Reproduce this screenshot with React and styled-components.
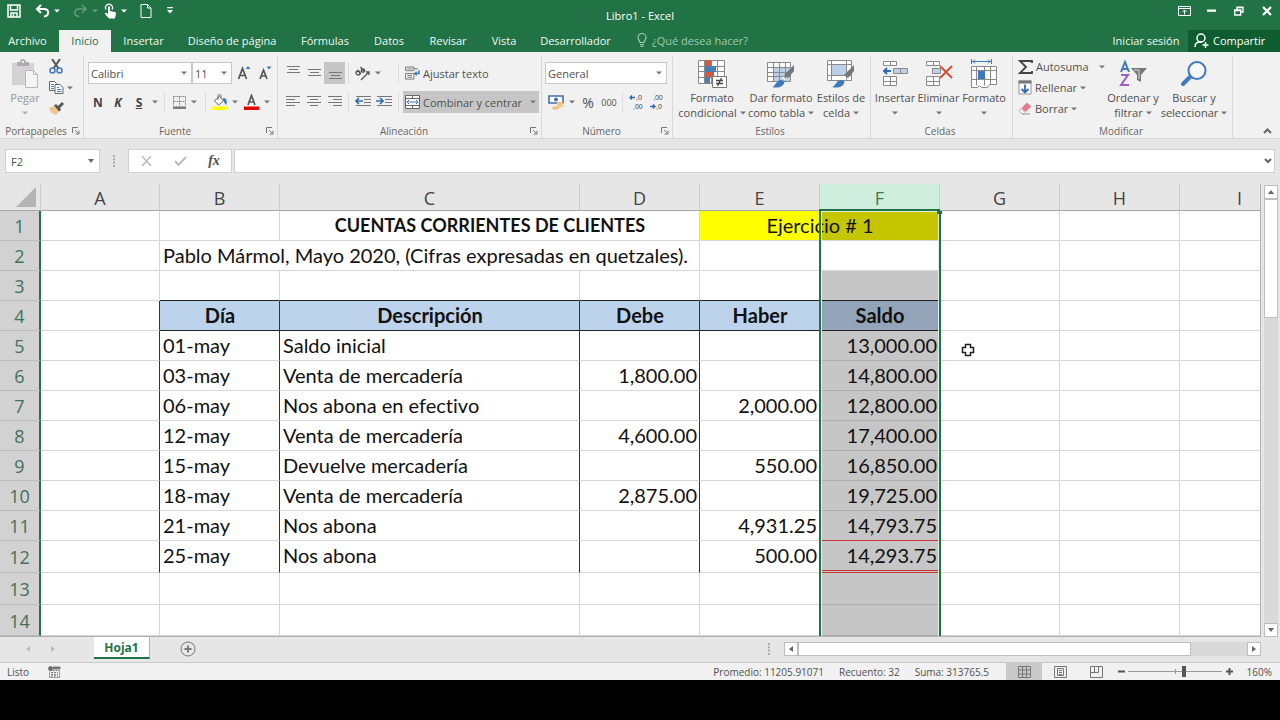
import React, { useState } from "react";
import styled, { createGlobalStyle, css } from "styled-components";

const GlobalStyle = createGlobalStyle`
    * {
        box-sizing: border-box;
    }
    body {
        margin: 0;
        background-color: #000;
        font-family: "Open Sans", "Noto Sans", sans-serif;
        font-size: 11px;
        color: #505050;
    }
    button, input, select {
        font: inherit;
        color: inherit;
    }
    button {
        border: none;
        padding: 0;
        background: none;
    }
`;

const Page = styled.div`
    display: flex;
    flex-direction: column;
    height: 100vh;
    padding-bottom: 40px;
    overflow: hidden;
    background-color: #000;
`;
const TitleBar = styled.header`
    display: grid;
    grid-template-columns: 1fr auto 1fr;
    height: 30px;
    flex: none;
    background-color: #217346;
    color: white;
`;
const QuickAccess = styled.div`
    display: flex;
    align-items: center;
    height: 21px;
    padding-left: 3px;
`;
const WindowTitle = styled.h1`
    margin: 0;
    font-size: 11px;
    font-weight: 400;
    line-height: 31px;
`;
const WindowButtons = styled.div`
    display: flex;
    align-items: center;
    justify-content: flex-end;
    height: 21px;
`;
const BarButton = styled.button`
    display: flex;
    align-items: center;
    justify-content: center;
    gap: 4px;
    width: ${(props) => props.$w}px;
    height: 21px;
    opacity: ${(props) => (props.$dim ? 0.3 : 1)};
`;

const TabRow = styled.nav`
    display: flex;
    height: 22px;
    flex: none;
    background-color: #217346;
    color: white;
`;
const Tab = styled.button`
    width: ${(props) => props.$w}px;
    height: 22px;
    padding-bottom: 2px;
    white-space: nowrap;
    background-color: ${(props) => (props.$active ? "#f1f1f1" : "transparent")};
    color: ${(props) => (props.$active ? "#217346" : "#f0f7f3")};

    &:first-child {
        margin-right: 4px;
    }
`;
const TellMe = styled.button`
    display: flex;
    align-items: center;
    gap: 5px;
    margin-left: 14px;
    padding-bottom: 2px;
    color: #9ccbb0;
`;
const SignIn = styled(Tab)`
    margin-left: auto;
`;
const Share = styled.button`
    display: flex;
    align-items: center;
    gap: 4px;
    width: 92px;
    padding: 0 0 2px 6px;
    background-color: #0e5c2f;
    color: white;
`;

const Ribbon = styled.div`
    display: flex;
    height: 87px;
    flex: none;
    padding-top: 4px;
    background-color: #f1f1f1;
    border-bottom: 1px solid #d5d5d5;
`;
const GroupBox = styled.section`
    display: flex;
    flex-direction: column;
    justify-content: space-between;
    width: ${(props) => props.$w}px;
    flex: none;
    border-right: 1px solid #d8d8d8;
`;
const GroupBody = styled.div`
    display: flex;
    height: 66px;
    padding-left: ${(props) => props.$pad}px;
`;
const GroupFooter = styled.div`
    display: flex;
    align-items: center;
    height: 14px;
    padding-right: 3px;
    font-size: 10px;
    color: #666;
`;
const GroupName = styled.span`
    flex: 1;
    text-align: center;
    white-space: nowrap;
`;
const Rows = styled.div`
    display: flex;
    flex-direction: column;
    gap: 7px;
    padding-top: 6px;
`;
const Row = styled.div`
    display: flex;
    align-items: center;
    height: 22px;
`;
const Tool = styled.button`
    display: flex;
    align-items: center;
    justify-content: center;
    width: ${(props) => props.$w || 21}px;
    height: 22px;
    font-size: ${(props) => props.$size || 11}px;
    background-color: ${(props) => (props.$on ? "#c6c6c6" : "transparent")};
`;
const CaretBox = styled.button`
    display: flex;
    align-items: center;
    width: ${(props) => props.$w}px;
    height: 22px;
    padding-left: 2px;
`;
const Sep = styled.span`
    width: 1px;
    height: 20px;
    margin: 0 ${(props) => props.$gap || 4}px;
    background-color: #dcdcdc;
`;
const Letter = styled.span`
    font-size: 12px;
    font-weight: 700;
    font-style: ${(props) => (props.$italic ? "italic" : "normal")};
    text-decoration: ${(props) => (props.$under ? "underline" : "none")};
    color: #444;
`;
const Combo = styled.span`
    display: flex;
    align-items: center;
    width: ${(props) => props.$w}px;
    height: 22px;
    padding-right: 4px;
    border: 1px solid #c8c8c8;
    background-color: white;
`;
const ComboSelect = styled.select`
    appearance: none;
    flex: 1;
    min-width: 0;
    border: none;
    padding: 0 0 0 2px;
    background: none;
    outline: none;
`;
const WideTool = styled.button`
    display: flex;
    align-items: center;
    gap: 3px;
    height: 22px;
    padding: 0 3px 0 2px;
    white-space: nowrap;
    background-color: ${(props) => (props.$on ? "#c6c6c6" : "transparent")};

    svg:last-child:not(:first-child) {
        margin-left: 5px;
    }
`;
const SmallTools = styled.div`
    display: flex;
    flex-direction: column;
    width: ${(props) => props.$w}px;
`;
const SmallTool = styled.button`
    display: flex;
    align-items: center;
    gap: 3px;
    height: 21px;
    padding-left: 1px;
    white-space: nowrap;
`;
const ToolName = styled.span`
    flex: ${(props) => (props.$grow ? 1 : "none")};
    text-align: left;
`;
const BigTool = styled.button`
    display: flex;
    flex-direction: column;
    align-items: center;
    width: ${(props) => props.$w}px;
    padding-top: 2px;
    line-height: 15px;
    white-space: nowrap;
    opacity: ${(props) => (props.$dim ? 0.55 : 1)};
`;
const BigIcon = styled.span`
    display: flex;
    align-items: center;
    justify-content: center;
    height: 32px;
`;
const BigLine = styled.span`
    display: flex;
    align-items: center;
    gap: 3px;
    height: 15px;
`;
const Collapse = styled.button`
    display: flex;
    align-items: flex-end;
    margin: 0 8px 4px auto;
`;

const FormulaBar = styled.div`
    display: flex;
    align-items: center;
    height: 45px;
    flex: none;
    padding: 0 5px 1px;
    background-color: #e6e6e6;
`;
const NameBox = styled.div`
    display: flex;
    align-items: center;
    width: 95px;
    height: 24px;
    padding-right: 5px;
    border: 1px solid #d0d0d0;
    background-color: white;
`;
const BareInput = styled.input`
    flex: 1;
    min-width: 0;
    border: none;
    padding: 0 5px;
    background: none;
    outline: none;
`;
const DotsBox = styled.span`
    display: flex;
    justify-content: center;
    width: 28px;
`;
const EditButtons = styled.div`
    display: flex;
    width: 104px;
    height: 24px;
    border: 1px solid #d0d0d0;
    background-color: white;
`;
const EditButton = styled.button`
    display: flex;
    align-items: center;
    justify-content: center;
    flex: 1;
`;
const FormulaField = styled(NameBox)`
    flex: 1;
    margin-left: 2px;
    padding-right: 2px;
`;

const SheetArea = styled.main`
    display: flex;
    flex: 1;
    min-height: 0;
    background-color: #e6e6e6;
`;
const GridView = styled.div`
    flex: 1;
    min-width: 0;
    overflow: hidden;
    background-color: white;
    border-right: 1px solid #b0b0b0;
    border-bottom: 1px solid #b0b0b0;
`;
const Grid = styled.table`
    width: 1300px;
    table-layout: fixed;
    border-collapse: separate;
    border-spacing: 0;
    font-family: Lato, "Open Sans", sans-serif;
    font-size: 20px;
    font-variant-ligatures: none;
    color: #111;
`;
const ColHead = styled.th`
    position: relative;
    height: 27px;
    padding: 2px 0 0;
    font-family: "Open Sans", sans-serif;
    font-size: 18px;
    font-weight: 400;
    line-height: 24px;
    background-color: ${(props) => (props.$selected ? "#cfeedd" : "#e6e6e6")};
    color: ${(props) => (props.$selected ? "#3c7a5a" : "#444")};
    border-right: 1px solid #cdcdcd;
    border-bottom: 1px solid #a8a8a8;
`;
const SelectionFrame = styled.span`
    position: absolute;
    top: calc(100% - 1px);
    left: -1px;
    right: -2px;
    height: 100vh;
    border: 2px solid #217346;
    box-shadow: inset 0 0 0 1px #e4efe8;
    pointer-events: none;

    &::after {
        content: "";
        position: absolute;
        top: -2px;
        right: -3px;
        width: 5px;
        height: 5px;
        background-color: #217346;
    }
`;
const Corner = styled.th`
    height: 27px;
    padding: 0 4px 3px 0;
    vertical-align: bottom;
    background-color: #e6e6e6;
    border-right: 1px solid #cdcdcd;
    border-bottom: 1px solid #a8a8a8;

    svg {
        display: block;
        margin-left: auto;
    }
`;
const RowHead = styled.th`
    height: ${(props) => props.$h}px;
    padding: 1px 0 0;
    font-family: "Open Sans", sans-serif;
    font-size: 18px;
    font-weight: 400;
    line-height: 26px;
    background-color: #d2d2d2;
    color: #44705a;
    border-right: 2px solid #217346;
    border-bottom: 1px solid #bcbcbc;
`;
const Cell = styled.td`
    padding: 0 2px 0 3px;
    vertical-align: top;
    font-size: ${(props) => (props.$heading ? 18 : 20)}px;
    line-height: 28px;
    white-space: nowrap;
    text-align: ${(props) => props.$align || "left"};
    font-weight: ${(props) => (props.$bold || props.$heading ? 700 : 400)};
    background: ${(props) => props.$bg || "white"};
    border-right: 1px solid ${(props) => (props.$lineRight ? "#333" : "#d6d6d6")};
    border-bottom: 1px solid ${(props) => (props.$lineBottom ? "#222" : "#d6d6d6")};

    ${(props) => props.$tone === "selected" && css`
        border-bottom-color: #adadad;
    `}
    ${(props) => props.$red && css`
        border-bottom: ${props.$red === "double" ? "3px double" : "1px solid"} #c93434;
    `}
`;

const ScrollColumn = styled.div`
    display: flex;
    flex-direction: column;
    width: 14px;
    margin: 1px 2px 0 3px;
    background-color: #d9d9d9;
`;
const ScrollButton = styled.button`
    display: flex;
    align-items: center;
    justify-content: center;
    width: 14px;
    height: 14px;
    flex: none;
    border: 1px solid #bdbdbd;
    background-color: white;
`;
const ThumbV = styled.div`
    height: 119px;
    border: 1px solid #bdbdbd;
    background-color: white;
`;
const Spring = styled.span`
    flex: 1;
`;

const SheetBar = styled.div`
    display: flex;
    height: 25px;
    flex: none;
    padding: 0 19px 2px 0;
    background-color: #e6e6e6;
`;
const SheetNav = styled.div`
    display: flex;
    align-items: center;
    justify-content: space-between;
    width: 94px;
    padding: 0 38px 0 25px;
`;
const SheetTab = styled.button`
    width: 56px;
    height: 22px;
    font-size: 12px;
    font-weight: 700;
    background-color: white;
    border-bottom: 2px solid #217346;
    border-right: 1px solid #b5b5b5;
    color: #217346;
`;
const AddSheet = styled.button`
    display: flex;
    align-items: center;
    margin-left: 30px;
`;
const ScrollRow = styled.div`
    display: flex;
    align-self: center;
    width: 477px;
    height: 14px;
    background-color: #d9d9d9;
`;
const ThumbH = styled.div`
    width: 393px;
    border: 1px solid #bdbdbd;
    background-color: white;
`;
const BarDots = styled(DotsBox)`
    align-items: center;
    width: 31px;
    margin-left: auto;
`;

const StatusBar = styled.footer`
    display: flex;
    align-items: center;
    height: 18px;
    flex: none;
    padding: 0 8px 0 7px;
    border-top: 1px solid #c9c9c9;
    background-color: #f1f1f1;
    font-size: 10px;
`;
const Stats = styled.div`
    display: flex;
    gap: 15px;
    margin: 0 17px 0 auto;
    white-space: nowrap;
`;
const MacroButton = styled.button`
    display: flex;
    margin-left: 19px;
`;
const ViewButton = styled.button`
    display: flex;
    align-items: center;
    justify-content: center;
    width: 36px;
    height: 17px;
    background-color: ${(props) => (props.$on ? "#c9c9c9" : "transparent")};
`;
const ZoomButton = styled.button`
    display: flex;
    align-items: center;
    justify-content: center;
    width: 14px;
    height: 17px;
`;
const ZoomSlider = styled.input`
    appearance: none;
    width: 94px;
    height: 12px;
    margin: 0;
    background: linear-gradient(#9a9a9a, #9a9a9a) center / 100% 1px no-repeat,
        linear-gradient(#9a9a9a, #9a9a9a) center / 1px 5px no-repeat;

    &::-webkit-slider-thumb {
        appearance: none;
        width: 4px;
        height: 11px;
        background-color: #555;
    }
`;
const ZoomLevel = styled.span`
    width: 36px;
    text-align: right;
`;
const Pointer = styled.svg`
    position: absolute;
    top: 343px;
    left: 961px;
    pointer-events: none;
`;

const Caret = ({ color = "#777" }) => (
    <svg width="6" height="4" viewBox="0 0 6 4"><path d="M0 .5h6L3 3.5z" fill={color} /></svg>
);
const Triangle = ({ dir, color = "#666" }) => {
    const shapes = { up: "M0 5h6L3 1z", down: "M0 1h6L3 5z", left: "M5 0v6L1 3z", right: "M1 0v6l4-3z" };
    return <svg width="6" height="6" viewBox="0 0 6 6"><path d={shapes[dir]} fill={color} /></svg>;
};
const Launcher = () => (
    <svg width="8" height="8" viewBox="0 0 8 8" fill="none" stroke="#777">
        <path d="M.5 6V.5H6M3 3l3.500 3.500M7 3.500V7H3.500" />
    </svg>
);
const Dots = () => (
    <svg width="2" height="12" viewBox="0 0 2 12" fill="#aaa">
        <path d="M0 0h2v2H0zM0 3.300h2v2H0zM0 6.600h2v2H0zM0 10h2v2H0z" />
    </svg>
);

const SaveIcon = () => (
    <svg width="14" height="14" viewBox="0 0 14 14" fill="none" stroke="white" strokeWidth="1.500">
        <path d="M1 1h12v12H1zM3.500 1v5h7V1M4 13V9h6v4M6.500 10v3" />
    </svg>
);
const UndoIcon = () => (
    <svg width="15" height="14" viewBox="0 0 15 14" fill="none" stroke="white" strokeWidth="2">
        <path d="M6 1L2 5l4 4M2.500 5H9c5.500 0 5.500 7 0 7.500" />
    </svg>
);
const RedoIcon = () => (
    <svg width="15" height="14" viewBox="0 0 15 14" fill="none" stroke="white" strokeWidth="1.500">
        <path d="M9 1l4 4-4 4M12.500 5H6c-5.500 0-5.500 7 0 7.500" />
    </svg>
);
const TouchIcon = () => (
    <svg width="13" height="16" viewBox="0 0 13 16">
        <path d="M2 6.500a3.500 3.500 0 1 1 6 0" fill="none" stroke="white" strokeWidth="1.300" />
        <path d="M4 4.200c0-1.400 2-1.400 2 0V8l5 1c1 .3 1 1 1 1.500l-1 5H5L1 11c-.5-1 .5-1.500 1.500-1L4 11z" fill="white" />
    </svg>
);
const NewIcon = () => (
    <svg width="12" height="14" viewBox="0 0 12 14" fill="none" stroke="white">
        <path d="M1 .5h6.500L11 4v9.500H1zM7.500.5V4H11" />
    </svg>
);
const MoreIcon = () => (
    <svg width="6" height="7" viewBox="0 0 6 7" fill="white"><path d="M0 0h6v1.300H0zM0 3h6L3 6.500z" /></svg>
);
const RibbonOptionsIcon = () => (
    <svg width="13" height="10" viewBox="0 0 13 10" fill="none" stroke="white">
        <path d="M.5.500h12v9H.5zM.5 2.500h12M6.500 8.500V4.500M4.500 6l2-2 2 2" />
    </svg>
);
const MinimizeIcon = () => (
    <svg width="9" height="3" viewBox="0 0 9 3"><path d="M0 .5h9v2.300H0z" fill="white" /></svg>
);
const RestoreIcon = () => (
    <svg width="10" height="10" viewBox="0 0 10 10" fill="none" stroke="white" strokeWidth="1.300">
        <path d="M.7 4h6v5h-6zM3 4V1.200h6V6H7M.7 4.700h6M3 1.500h6" />
    </svg>
);
const CloseIcon = () => (
    <svg width="10" height="10" viewBox="0 0 10 10" stroke="white" strokeWidth="2.200"><path d="M1 1l8 8M9 1L1 9" /></svg>
);
const BulbIcon = () => (
    <svg width="10" height="14" viewBox="0 0 10 14" fill="none" stroke="#9ccbb0" strokeWidth="1.200">
        <path d="M3 9.500C3 7.500 1 7 1 4.500a4 4 0 0 1 8 0C9 7 7 7.500 7 9.500zM3 11.500h4M3.500 13.300h3" />
    </svg>
);
const PersonIcon = () => (
    <svg width="15" height="15" viewBox="0 0 15 15" fill="none" stroke="white" strokeWidth="1.500">
        <circle cx="7" cy="5" r="4" /><path d="M1 14c0-3 2-5 5-5h2M11.500 9v6M8.500 12h6" />
    </svg>
);

const PasteIcon = () => (
    <svg width="28" height="30" viewBox="0 0 28 30">
        <path d="M1 4h22v22H1z" fill="#bdb9bd" />
        <path d="M6 7V3h3c0-4 6-4 6 0h3v4z" fill="#777" />
        <path d="M11 2h2v2h-2z" fill="#f1f1f1" />
        <path d="M14.500 11.500h8l4 4v13h-12z" fill="#fafafa" stroke="#888" />
        <path d="M22.500 11.500v4h4" fill="none" stroke="#888" />
    </svg>
);
const CutIcon = () => (
    <svg width="14" height="15" viewBox="0 0 14 15" fill="none" strokeWidth="1.500">
        <path d="M3 0l6.500 9.500M11 0L4.500 9.500" stroke="#555" strokeWidth="2" />
        <circle cx="3.500" cy="11.500" r="2.500" stroke="#3f7abf" /><circle cx="10.500" cy="11.500" r="2.500" stroke="#3f7abf" />
    </svg>
);
const CopyIcon = () => (
    <svg width="15" height="13" viewBox="0 0 15 13" fill="white" stroke="#666">
        <path d="M.5.500h5l2 2v7h-7z" /><path d="M6 3.500h5l3 3v6H6z" />
        <path d="M2 3.500h3M2 5.500h3M2 7.500h3M8 6.500h2M8 8.500h4.500M8 10.500h4.500" stroke="#4a82c3" />
    </svg>
);
const BrushIcon = () => (
    <svg width="15" height="13" viewBox="0 0 15 13">
        <path d="M0 6l5-2 5 5-3 4C4 12 1 10 0 6z" fill="#efc58b" />
        <path d="M5 3.500L7 2l2 2 4-4 2 2-4 4 1 2-2 1.500z" fill="#555" />
    </svg>
);
const FontSizeIcon = ({ small }) => (
    <svg width="14" height="16" viewBox="0 0 14 16">
        <path d={small ? "M2 14L5.500 5 9 14M3 11h5" : "M1.500 14L5.500 3.500 9.500 14M3 10.500h5"} fill="none" stroke="#555" strokeWidth="1.700" />
        <path d={small ? "M8.500 1.500h5l-2.500 3z" : "M8.500 4h5L11 1z"} fill="#3f7abf" />
    </svg>
);
const BordersIcon = () => (
    <svg width="13" height="13" viewBox="0 0 13 13" fill="none" stroke="#888">
        <path d="M.5.500h12v10H.5zM.5 5.500h12M6.500.500v10" strokeDasharray="2 1" /><path d="M0 12h13" stroke="#555" strokeWidth="1.500" />
    </svg>
);
const FillIcon = () => (
    <svg width="16" height="16" viewBox="0 0 16 16">
        <path d="M2.500 6.500l5-4 4 4.500-5 4z" fill="white" stroke="#666" /><path d="M6 6V2c0-2 3-2 3 0v2" fill="none" stroke="#666" />
        <path d="M11 4c4 0 4 3 3.500 7-2-1-2-3-3.500-5z" fill="#3f7abf" /><path d="M0 12.500h15v3.500H0z" fill="#ffff00" />
    </svg>
);
const FontColorIcon = () => (
    <svg width="15" height="16" viewBox="0 0 15 16">
        <path d="M4 11L7.500 1.500 11 11M5 8h5" fill="none" stroke="#555" strokeWidth="1.700" /><path d="M0 12.500h15v3.500H0z" fill="#e60000" />
    </svg>
);

// each entry is [x1, x2] for one line of the paragraph
const Lines = ({ rows, top = 1, gap = 3 }) => (
    <svg width="14" height="14" viewBox="0 0 14 14" stroke="#777">
        {rows.map(([x1, x2], i) => (
            <path key={i} d={`M${x1} ${top + i * gap + 0.5}H${x2}`} />
        ))}
    </svg>
);
const VAlignIcon = ({ top }) => <Lines top={top} rows={[[1, 14], [3, 12], [1, 14]]} />;
const HAlignIcon = ({ side }) => {
    const short = { left: [0, 9], center: [3, 11], right: [5, 14] }[side];
    return <Lines rows={[[0, 14], short, [0, 14], short]} />;
};
const IndentIcon = ({ out }) => (
    <svg width="16" height="14" viewBox="0 0 16 14" fill="none" stroke="#777">
        <path d="M1 1.500h15M9 4.500h7M9 7.500h7M1 10.500h15" />
        <path d={out ? "M8 6H1M4 3L1 6l3 3" : "M0 6h7M4 3l3 3-3 3"} stroke="#2f6cb5" strokeWidth="1.700" />
    </svg>
);
const OrientIcon = () => (
    <svg width="17" height="15" viewBox="0 0 17 15" fill="none" stroke="#555" strokeWidth="1.300">
        <circle cx="4" cy="7" r="2" /><path d="M3 4l4 4M6.500 1l3.500 4.500" /><circle cx="9" cy="4.500" r="1.700" />
        <path d="M7 14l8-8M15 9V6h-3" />
    </svg>
);
const WrapIcon = () => (
    <svg width="15" height="15" viewBox="0 0 16 15" fill="none" stroke="#777">
        <path d="M.5.500h9v4h-9zM9.500 2.500H14M.5 7.500h9v6h-9zM2.500 9.500h5M2.500 11.500h5M2 2.500h6" />
        <path d="M15 4v3.500h-4.500M12.500 5.500l-2 2 2 2" stroke="#3f7abf" strokeWidth="1.500" />
    </svg>
);
const MergeIcon = () => (
    <svg width="15" height="14" viewBox="0 0 15 14" fill="white" stroke="#666">
        <path d="M.5.500h14v13H.5zM.5 3.500h14M.5 10.500h14M7.500.500v3M7.500 10.500v3" /><path d="M2 7h11M4 5L2 7l2 2M11 5l2 2-2 2" fill="none" stroke="#3f7abf" />
    </svg>
);
const MoneyIcon = () => (
    <svg width="16" height="15" viewBox="0 0 16 15">
        <path d="M1 1h14v7H1z" fill="white" stroke="#3f6ea8" strokeWidth="1.600" /><circle cx="8" cy="4.500" r="2" fill="#3f6ea8" />
        <ellipse cx="12" cy="8.500" rx="3.500" ry="1.700" fill="#f0c27c" /><path d="M8.500 10.500h7v1.500h-7z" fill="#f0c27c" />
        <ellipse cx="7.500" cy="13" rx="3.500" ry="1.700" fill="#f0c27c" />
    </svg>
);
const TinyDigits = styled.text`
    font-family: "Liberation Sans", sans-serif;
    font-size: 7px;
    fill: #444;
`;
const DecimalIcon = ({ more }) => (
    <svg width="16" height="18" viewBox="0 0 16 18">
        <TinyDigits x={more ? 7 : 4} y="7">{more ? ",0" : ",00"}</TinyDigits>
        <TinyDigits x={more ? 4 : 7} y="16">{more ? ",00" : ",0"}</TinyDigits>
        <path d={more ? "M6 4.500H1M3 2.500L1 4.500l2 2" : "M1 13.500h5M4 11.500l2 2-2 2"} fill="none" stroke="#2f6cb5" strokeWidth="1.400" />
    </svg>
);

const CondIcon = () => (
    <svg width="30" height="30" viewBox="0 0 30 30">
        <path d="M1.500 1.500h26v23h-26z" fill="white" />
        <path d="M1.500 1.500h26v23h-26zM1.500 7.500h26M1.500 12.500h26M1.500 18.500h26M7.500 1.500v23M14.500 1.500v23M20.500 1.500v23" fill="none" stroke="#8a8a8a" />
        <path d="M8 1h6v6H8zM8 13h9v5H8z" fill="#cf5b45" /><path d="M8 7h11v6H8zM8 18h5v6H8z" fill="#4a7db8" />
        <path d="M15.500 17.500h14v11h-14z" fill="white" stroke="#777" />
        <path d="M19 21.500h7M19 24.500h7M24.500 19l-4 8" fill="none" stroke="#444" strokeWidth="1.300" />
    </svg>
);
const PaintBrush = () => (
    <>
        <path d="M28 6v6l-6 7-4-3z" fill="#777" />
        <path d="M6 28c4-1 4-7 9-7 4 0 4 3 2 5-3 3-7 3-11 2z" fill="#3f7abf" />
        <path d="M16 18l4 3" stroke="white" strokeWidth="1.500" />
    </>
);
const TableIcon = () => (
    <svg width="30" height="30" viewBox="0 0 30 30">
        <path d="M1.500 3.500h23v19h-23z" fill="white" /><path d="M7 8h17v14H7z" fill="#bcd0e8" />
        <path d="M1.500 3.500h23v19h-23zM1.500 8.500h23M1.500 13.500h23M1.500 17.500h23M7.500 3.500v19M13.500 3.500v19M19.500 3.500v19" fill="none" stroke="#8a8a8a" />
        <PaintBrush />
    </svg>
);
const CellStyleIcon = () => (
    <svg width="30" height="30" viewBox="0 0 30 30">
        <path d="M1.500 1.500h24v20h-24z" fill="white" /><path d="M6 6h14v10H6z" fill="#bcd0e8" />
        <path d="M1.500 1.500h24v20h-24zM1.500 5.500h24M1.500 16.500h24M5.500 1.500v20M20.500 1.500v20" fill="none" stroke="#8a8a8a" />
        <PaintBrush />
    </svg>
);
const InsertIcon = () => (
    <svg width="26" height="28" viewBox="0 0 26 28" fill="white" stroke="#8a8a8a">
        <path d="M1.500 1.500h13v4h-13zM8.500 1.500v4M1.500 16.500h13v9h-13zM8.500 16.500v9M1.500 21.500h13" />
        <path d="M11.500 8.500h14v5h-14zM18.500 8.500v5" fill="#bcd0e8" />
        <path d="M9 11H2M5 8l-3 3 3 3" fill="none" stroke="#2f6cb5" strokeWidth="2" />
    </svg>
);
const DeleteIcon = () => (
    <svg width="28" height="28" viewBox="0 0 28 28" fill="white" stroke="#8a8a8a">
        <path d="M1.500 1.500h13v4h-13zM8.500 1.500v4M1.500 16.500h13v9h-13zM8.500 16.500v9M1.500 21.500h13" />
        <path d="M7.500 8.500h8v5h-8z" fill="#bcd0e8" /><path d="M15 6l12 12M27 6L15 18" fill="none" stroke="#d9503a" strokeWidth="2" />
    </svg>
);
const FormatIcon = () => (
    <svg width="28" height="30" viewBox="0 0 28 30" fill="white" stroke="#8a8a8a">
        <path d="M1.500 7.500h25v18h-7l-2 3h-6l-2-2-2 2h-6zM1.500 11.500h25M1.500 20.500h25M6.500 7.500v19M14.500 7.500v19M20.500 7.500v18" />
        <path d="M8 12h7v8H8z" fill="#3f7abf" stroke="none" />
        <path d="M1.500 0v5M21.500 0v5M2 2.500h19M5 .5l-2 2 2 2M18 .5l2 2-2 2" fill="none" stroke="#3f7abf" />
    </svg>
);
const SumIcon = () => (
    <svg width="15" height="14" viewBox="0 0 15 14" fill="none" stroke="#444" strokeWidth="1.800">
        <path d="M14 3V1H2l6 6-6 6h12v-2" />
    </svg>
);
const FillDownIcon = () => (
    <svg width="14" height="15" viewBox="0 0 14 15">
        <path d="M1 1h12v13H1z" fill="white" stroke="#999" /><path d="M.5.500h13v3H.5z" fill="#777" />
        <path d="M7 4.500v8M3.500 9L7 12.500 10.500 9" fill="none" stroke="#2f6cb5" strokeWidth="1.800" />
    </svg>
);
const EraserIcon = () => (
    <svg width="14" height="13" viewBox="0 0 14 13">
        <path d="M3.500 6L9 .5l4 4L7.500 10z" fill="#e8788c" /><path d="M3 6.500L.8 8.700 3.500 11.500H6l1-1z" fill="white" stroke="#e8a0ab" /><path d="M4 12h8" stroke="#999" />
    </svg>
);
const SortIcon = () => (
    <svg width="28" height="28" viewBox="0 0 28 28" fill="none" strokeWidth="2">
        <path d="M2 12L6 2l4 10M3.500 9h5" stroke="#3f7abf" /><path d="M2 15h7l-7 10h8" stroke="#9a5fc0" />
        <path d="M12 8h16l-6 7v7l-4-2v-5z" fill="#777" /><path d="M15 10h5v9" stroke="#ddd" strokeWidth="1" />
    </svg>
);
const SearchIcon = () => (
    <svg width="28" height="28" viewBox="0 0 28 28">
        <path d="M11 16L3 24" stroke="#3f7abf" strokeWidth="4" strokeLinecap="round" /><circle cx="17" cy="10.500" r="8.500" fill="#f8fafd" stroke="#3f7abf" strokeWidth="2" />
    </svg>
);
const CancelIcon = () => (
    <svg width="11" height="10" viewBox="0 0 11 10" stroke="#bbb" strokeWidth="1.500"><path d="M1 0l9 10M10 0L1 10" /></svg>
);
const AcceptIcon = () => (
    <svg width="13" height="10" viewBox="0 0 13 10" fill="none" stroke="#bbb" strokeWidth="2"><path d="M1 5l3.500 4L12 1" /></svg>
);
const FxLabel = styled.span`
    font-family: "Liberation Serif", serif;
    font-size: 14px;
    font-weight: 700;
    font-style: italic;
`;
const MacroIcon = () => (
    <svg width="13" height="12" viewBox="0 0 13 12" stroke="#777" fill="none">
        <path d="M1.500 4.500h10v7h-10zM3 6.500h7M3 8.500h7M3 10h7" strokeDasharray="2 1" /><path d="M5 1h7v2H5z" fill="#777" /><circle cx="2.500" cy="2.500" r="2" fill="#666" />
    </svg>
);
const NormalViewIcon = () => (
    <svg width="13" height="12" viewBox="0 0 13 12" fill="none" stroke="#777"><path d="M.5.500h12v11H.5zM.5 4h12M.5 8h12M4.500.500v11M8.500.500v11" /></svg>
);
const LayoutViewIcon = () => (
    <svg width="13" height="12" viewBox="0 0 13 12" fill="none" stroke="#777"><path d="M.5.500h12v11H.5zM3.500 2.500h6v7h-6zM5 4.500h3M5 6.500h3M5 8.500h3" /></svg>
);
const BreakViewIcon = () => (
    <svg width="13" height="12" viewBox="0 0 13 12" fill="none" stroke="#777"><path d="M.5.500h12v11H.5zM.5 6.500h8v-6M4.500.500v6" /></svg>
);

const menuTabs = [
    ["Archivo", 55], ["Inicio", 52], ["Insertar", 65], ["Diseño de página", 112], ["Fórmulas", 74],
    ["Datos", 54], ["Revisar", 64], ["Vista", 48], ["Desarrollador", 95],
];
const columns = ["A", "B", "C", "D", "E", "F", "G", "H", "I"];
const movements = [
    ["01-may", "Saldo inicial", "", "", "13,000.00"],
    ["03-may", "Venta de mercadería", "1,800.00", "", "14,800.00"],
    ["06-may", "Nos abona en efectivo", "", "2,000.00", "12,800.00"],
    ["12-may", "Venta de mercadería", "4,600.00", "", "17,400.00"],
    ["15-may", "Devuelve mercadería", "", "550.00", "16,850.00"],
    ["18-may", "Venta de mercadería", "2,875.00", "", "19,725.00"],
    ["21-may", "Nos abona", "", "4,931.25", "14,793.75"],
    ["25-may", "Nos abona", "", "500.00", "14,293.75"],
];
const GRAY = "#c6c6c6";

function Group({ name, width, pad = 4, launcher, children }) {
    return (
        <GroupBox $w={width} aria-label={name}>
            <GroupBody $pad={pad}>{children}</GroupBody>
            <GroupFooter>
                <GroupName>{name}</GroupName>
                {launcher && <button aria-label={`Opciones de ${name}`}><Launcher /></button>}
            </GroupFooter>
        </GroupBox>
    );
}

function Big({ icon, lines, width, dim }) {
    return (
        <BigTool $w={width} $dim={dim}>
            <BigIcon>{icon}</BigIcon>
            <BigLine>{lines[0]}</BigLine>
            <BigLine>{lines[1]}<Caret /></BigLine>
        </BigTool>
    );
}

function Drop({ w, label }) {
    return <CaretBox $w={w} aria-label={label}><Caret /></CaretBox>;
}

function Blank({ count }) {
    return Array.from({ length: count }, (_, i) => <Cell key={i} />);
}

function Sheet() {
    return (
        <Grid>
            <colgroup>
                {[41, 119, 120, 300, 120, 120, 120, 120, 120, 120].map((w, i) => <col key={i} width={w} />)}
            </colgroup>
            <thead>
                <tr>
                    <Corner aria-label="Seleccionar todo">
                        <svg width="20" height="20" viewBox="0 0 20 20"><path d="M20 0v20H0z" fill="#b4b4b4" /></svg>
                    </Corner>
                    {columns.map((col) => (
                        <ColHead key={col} $selected={col === "F"}>
                            {col}
                            {col === "F" && <SelectionFrame />}
                        </ColHead>
                    ))}
                </tr>
            </thead>
            <tbody>
                <tr>
                    <RowHead $h={30}>1</RowHead>
                    <Blank count={2} />
                    <Cell colSpan={2} $align="center" $heading>CUENTAS CORRIENTES DE CLIENTES</Cell>
                    <Cell colSpan={2} $align="center" $bg="linear-gradient(90deg, #ffff00 50%, #c6c600 50%)">Ejercicio # 1</Cell>
                    <Blank count={3} />
                </tr>
                <tr>
                    <RowHead $h={30}>2</RowHead>
                    <Cell />
                    <Cell colSpan={3}>Pablo Mármol, Mayo 2020, (Cifras expresadas en quetzales).</Cell>
                    <Blank count={5} />
                </tr>
                <tr>
                    <RowHead $h={30}>3</RowHead>
                    <Cell />
                    <Cell $lineBottom /><Cell $lineBottom /><Cell $lineBottom /><Cell $lineBottom />
                    <Cell $lineBottom $bg={GRAY} />
                    <Blank count={3} />
                </tr>
                <tr>
                    <RowHead $h={30}>4</RowHead>
                    <Cell $lineRight />
                    {["Día", "Descripción", "Debe", "Haber", "Saldo"].map((title) => (
                        <Cell key={title} $align="center" $bold $lineRight $lineBottom $bg={title === "Saldo" ? "#94a4b8" : "#bdd3ec"}>
                            {title}
                        </Cell>
                    ))}
                    <Blank count={3} />
                </tr>
                {movements.map(([day, text, debit, credit, balance], i) => (
                    <tr key={day}>
                        <RowHead $h={i === 7 ? 32 : 30}>{i + 5}</RowHead>
                        <Cell $lineRight />
                        <Cell $lineRight>{day}</Cell>
                        <Cell $lineRight>{text}</Cell>
                        <Cell $lineRight $align="right">{debit}</Cell>
                        <Cell $align="right">{credit}</Cell>
                        <Cell $align="right" $bg={GRAY} $tone="selected" $red={{ 6: "single", 7: "double" }[i]}>{balance}</Cell>
                        <Blank count={3} />
                    </tr>
                ))}
                {[13, 14].map((n) => (
                    <tr key={n}>
                        <RowHead $h={n === 13 ? 32 : 31}>{n}</RowHead>
                        <Blank count={5} />
                        <Cell $bg={GRAY} $tone="selected" />
                        <Blank count={3} />
                    </tr>
                ))}
            </tbody>
        </Grid>
    );
}

function App() {
    const [zoom, setZoom] = useState(60);

    return (
        <Page>
            <GlobalStyle />
            <TitleBar>
                <QuickAccess>
                    <BarButton $w={22} aria-label="Guardar"><SaveIcon /></BarButton>
                    <BarButton $w={44} aria-label="Deshacer"><UndoIcon /><Caret color="white" /></BarButton>
                    <BarButton $w={32} $dim aria-label="Rehacer"><RedoIcon /><Caret color="white" /></BarButton>
                    <BarButton $w={28} aria-label="Modo táctil"><TouchIcon /><Caret color="white" /></BarButton>
                    <BarButton $w={34} aria-label="Nuevo"><NewIcon /></BarButton>
                    <BarButton $w={14} aria-label="Personalizar"><MoreIcon /></BarButton>
                </QuickAccess>
                <WindowTitle>Libro1 - Excel</WindowTitle>
                <WindowButtons>
                    <BarButton $w={27} aria-label="Opciones de cinta"><RibbonOptionsIcon /></BarButton>
                    <BarButton $w={27} aria-label="Minimizar"><MinimizeIcon /></BarButton>
                    <BarButton $w={28} aria-label="Restaurar"><RestoreIcon /></BarButton>
                    <BarButton $w={27} aria-label="Cerrar"><CloseIcon /></BarButton>
                </WindowButtons>
            </TitleBar>
            <TabRow>
                {menuTabs.map(([name, w]) => (
                    <Tab key={name} $w={w} $active={name === "Inicio"}>{name}</Tab>
                ))}
                <TellMe><BulbIcon />¿Qué desea hacer?</TellMe>
                <SignIn $w={84}>Iniciar sesión</SignIn>
                <Share><PersonIcon />Compartir</Share>
            </TabRow>

            <Ribbon>
                <Group name="Portapapeles" width={84} pad={2} launcher>
                    <Big icon={<PasteIcon />} lines={["Pegar", ""]} width={46} dim />
                    <SmallTools $w={30}>
                        <SmallTool aria-label="Cortar"><CutIcon /></SmallTool>
                        <SmallTool aria-label="Copiar"><CopyIcon /><Caret /></SmallTool>
                        <SmallTool aria-label="Copiar formato"><BrushIcon /></SmallTool>
                    </SmallTools>
                </Group>
                <Group name="Fuente" width={194} launcher>
                    <Rows>
                        <Row>
                            <Combo $w={104}>
                                <ComboSelect aria-label="Fuente"><option>Calibri</option></ComboSelect><Caret />
                            </Combo>
                            <Combo $w={40}>
                                <ComboSelect aria-label="Tamaño de fuente"><option>11</option></ComboSelect><Caret />
                            </Combo>
                            <Tool $w={24} aria-label="Aumentar fuente"><FontSizeIcon /></Tool>
                            <Tool $w={18} aria-label="Disminuir fuente"><FontSizeIcon small /></Tool>
                        </Row>
                        <Row>
                            <Tool $w={20}><Letter>N</Letter></Tool>
                            <Tool $w={20}><Letter $italic>K</Letter></Tool>
                            <Tool $w={22}><Letter $under>S</Letter></Tool>
                            <Drop w={10} label="Subrayado" />
                            <Sep />
                            <Tool $w={20} aria-label="Bordes"><BordersIcon /></Tool>
                            <Drop w={12} label="Más bordes" />
                            <Sep />
                            <Tool $w={20} aria-label="Color de relleno"><FillIcon /></Tool>
                            <Drop w={10} label="Más rellenos" />
                            <Tool $w={22} aria-label="Color de fuente"><FontColorIcon /></Tool>
                            <Drop w={10} label="Más colores" />
                        </Row>
                    </Rows>
                </Group>
                <Group name="Alineación" width={264} launcher>
                    <Rows>
                        <Row>
                            <Tool aria-label="Alinear arriba"><VAlignIcon top={0} /></Tool>
                            <Tool aria-label="Alinear al medio"><VAlignIcon top={3} /></Tool>
                            <Tool $on aria-label="Alinear abajo"><VAlignIcon top={6} /></Tool>
                            <Sep $gap={3} />
                            <Tool aria-label="Orientación"><OrientIcon /></Tool>
                            <Drop w={21} label="Más orientaciones" />
                            <Sep $gap={4} />
                            <WideTool><WrapIcon />Ajustar texto</WideTool>
                        </Row>
                        <Row>
                            <Tool aria-label="Alinear a la izquierda"><HAlignIcon side="left" /></Tool>
                            <Tool aria-label="Centrar"><HAlignIcon side="center" /></Tool>
                            <Tool aria-label="Alinear a la derecha"><HAlignIcon side="right" /></Tool>
                            <Sep $gap={3} />
                            <Tool aria-label="Disminuir sangría"><IndentIcon out /></Tool>
                            <Tool aria-label="Aumentar sangría"><IndentIcon /></Tool>
                            <Sep $gap={4} />
                            <WideTool $on><MergeIcon />Combinar y centrar<Caret /></WideTool>
                        </Row>
                    </Rows>
                </Group>
                <Group name="Número" width={131} pad={3} launcher>
                    <Rows>
                        <Row>
                            <Combo $w={122}>
                                <ComboSelect aria-label="Formato de número"><option>General</option></ComboSelect><Caret />
                            </Combo>
                        </Row>
                        <Row>
                            <Tool $w={22} aria-label="Moneda"><MoneyIcon /></Tool>
                            <Drop w={9} label="Más monedas" />
                            <Tool $w={24} $size={14}>%</Tool>
                            <Tool $w={18} $size={9}>000</Tool>
                            <Sep />
                            <Tool $w={20} aria-label="Aumentar decimales"><DecimalIcon more /></Tool>
                            <Tool $w={20} aria-label="Disminuir decimales"><DecimalIcon /></Tool>
                        </Row>
                    </Rows>
                </Group>
                <Group name="Estilos" width={198}>
                    <Big icon={<CondIcon />} lines={["Formato", "condicional"]} width={70} />
                    <Big icon={<TableIcon />} lines={["Dar formato", "como tabla"]} width={68} />
                    <Big icon={<CellStyleIcon />} lines={["Estilos de", "celda"]} width={52} />
                </Group>
                <Group name="Celdas" width={142} pad={2}>
                    <Big icon={<InsertIcon />} lines={["Insertar", ""]} width={44} />
                    <Big icon={<DeleteIcon />} lines={["Eliminar", ""]} width={43} />
                    <Big icon={<FormatIcon />} lines={["Formato", ""]} width={48} />
                </Group>
                <Group name="Modificar" width={220}>
                    <SmallTools $w={88}>
                        <SmallTool><SumIcon /><ToolName $grow>Autosuma</ToolName><Caret /></SmallTool>
                        <SmallTool><FillDownIcon /><ToolName>Rellenar</ToolName><Caret /></SmallTool>
                        <SmallTool><EraserIcon /><ToolName>Borrar</ToolName><Caret /></SmallTool>
                    </SmallTools>
                    <Big icon={<SortIcon />} lines={["Ordenar y", "filtrar"]} width={56} />
                    <Big icon={<SearchIcon />} lines={["Buscar y", "seleccionar"]} width={66} />
                </Group>
                <Collapse aria-label="Contraer la cinta">
                    <svg width="9" height="6" viewBox="0 0 9 6" fill="none" stroke="#666" strokeWidth="2"><path d="M1 5l3.500-3.500L8 5" /></svg>
                </Collapse>
            </Ribbon>

            <FormulaBar>
                <NameBox>
                    <BareInput aria-label="Cuadro de nombres" defaultValue="F2" /><Triangle dir="down" />
                </NameBox>
                <DotsBox><Dots /></DotsBox>
                <EditButtons>
                    <EditButton aria-label="Cancelar"><CancelIcon /></EditButton>
                    <EditButton aria-label="Introducir"><AcceptIcon /></EditButton>
                    <EditButton aria-label="Insertar función"><FxLabel>fx</FxLabel></EditButton>
                </EditButtons>
                <FormulaField>
                    <BareInput aria-label="Barra de fórmulas" />
                    <svg width="8" height="6" viewBox="0 0 8 6" fill="none" stroke="#666" strokeWidth="2"><path d="M1 1l3 3 3-3" /></svg>
                </FormulaField>
            </FormulaBar>

            <SheetArea>
                <GridView><Sheet /></GridView>
                <ScrollColumn>
                    <ScrollButton aria-label="Subir"><Triangle dir="up" /></ScrollButton>
                    <ThumbV />
                    <Spring />
                    <ScrollButton aria-label="Bajar"><Triangle dir="down" /></ScrollButton>
                </ScrollColumn>
            </SheetArea>

            <SheetBar>
                <SheetNav>
                    <Triangle dir="left" color="#bbb" />
                    <Triangle dir="right" color="#bbb" />
                </SheetNav>
                <SheetTab>Hoja1</SheetTab>
                <AddSheet aria-label="Hoja nueva">
                    <svg width="16" height="16" viewBox="0 0 16 16" fill="none" stroke="#777">
                        <circle cx="8" cy="8" r="7" /><path d="M8 4.500v7M4.500 8h7" strokeWidth="1.800" />
                    </svg>
                </AddSheet>
                <BarDots><Dots /></BarDots>
                <ScrollRow>
                    <ScrollButton aria-label="Izquierda"><Triangle dir="left" /></ScrollButton>
                    <ThumbH />
                    <Spring />
                    <ScrollButton aria-label="Derecha"><Triangle dir="right" /></ScrollButton>
                </ScrollRow>
            </SheetBar>

            <StatusBar>
                Listo
                <MacroButton aria-label="Grabar macro"><MacroIcon /></MacroButton>
                <Stats>
                    <span>Promedio: 11205.91071</span>
                    <span>Recuento: 32</span>
                    <span>Suma: 313765.5</span>
                </Stats>
                <ViewButton $on aria-label="Normal"><NormalViewIcon /></ViewButton>
                <ViewButton aria-label="Diseño de página"><LayoutViewIcon /></ViewButton>
                <ViewButton aria-label="Vista de salto de página"><BreakViewIcon /></ViewButton>
                <ZoomButton aria-label="Alejar">
                    <svg width="7" height="7" viewBox="0 0 7 7"><path d="M0 3.500h7" stroke="#555" strokeWidth="2" /></svg>
                </ZoomButton>
                <ZoomSlider type="range" aria-label="Zoom" value={zoom} onChange={(e) => setZoom(e.target.value)} />
                <ZoomButton aria-label="Acercar">
                    <svg width="7" height="7" viewBox="0 0 7 7"><path d="M0 3.500h7M3.500 0v7" stroke="#555" strokeWidth="2" /></svg>
                </ZoomButton>
                <ZoomLevel>160%</ZoomLevel>
            </StatusBar>

            <Pointer width="14" height="14" viewBox="0 0 14 14">
                <path d="M4.500 1.500h5v3h3v5h-3v3h-5v-3h-3v-5h3z" fill="white" stroke="#222" strokeWidth="1.500" />
            </Pointer>
        </Page>
    );
}
export default App;
